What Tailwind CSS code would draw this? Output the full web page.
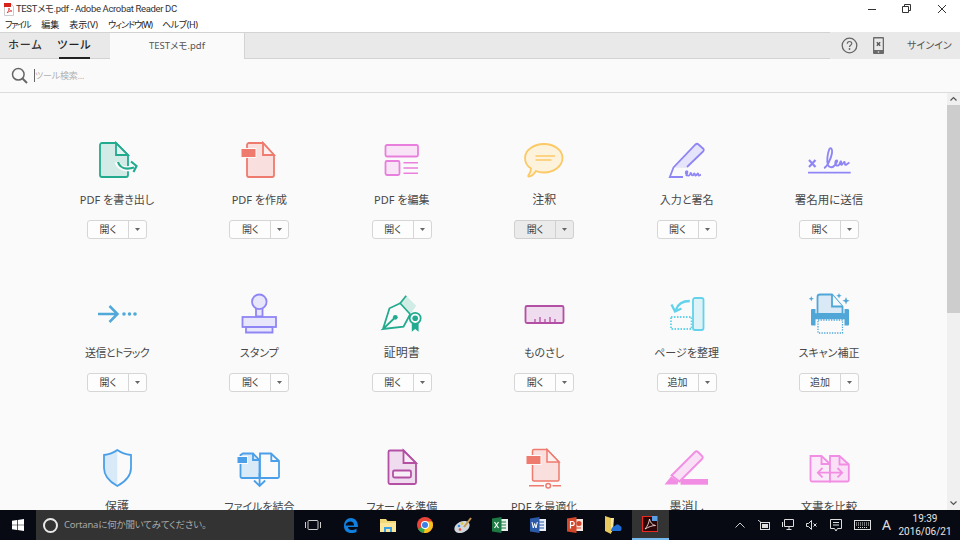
<!DOCTYPE html>
<html lang="ja">
<head>
<meta charset="utf-8">
<title>TESTメモ.pdf - Adobe Acrobat Reader DC</title>
<script src="https://cdn.jsdelivr.net/npm/@tailwindcss/browser@4"></script>
</head>
<body class="w-[960px] h-[540px] overflow-hidden flex flex-col bg-white font-['Noto_Sans','Noto_Sans_CJK_JP',sans-serif] [font-feature-settings:'palt'] text-[#444]">

<!-- title bar -->
<header class="h-[18px] flex items-center bg-white shrink-0">
  <svg class="ml-[4px] mt-[1px] w-[10px] h-[13px]" viewBox="0 0 10 13"><path d="M.5.5h6l3 3v9h-9z" fill="#fff" stroke="#ccc"/><rect x="0" y="0" width="7" height="4" fill="#d8231c"/><path d="M3 10c1-1 2-3 2-5 0 2 1 3 3 3-2 0-4 1-5 2z" fill="none" stroke="#d8231c" stroke-width=".7"/></svg>
  <span class="ml-[2px] font-['Roboto','Noto_Sans_CJK_JP',sans-serif] text-[9.500px] tracking-[-0.35px] text-[#333] whitespace-nowrap">TESTメモ.pdf - Adobe Acrobat Reader DC</span>
  <div class="ml-auto flex items-center h-full">
    <svg class="w-[10px] h-[10px] mr-[24px]" viewBox="0 0 10 10"><path d="M1 5.500h8" stroke="#333"/></svg>
    <svg class="w-[10px] h-[10px] mr-[26px]" viewBox="0 0 10 10"><path d="M1.500 2.500h6v6h-6zM3.500 2.500v-2h6v6h-2" fill="none" stroke="#333"/></svg>
    <svg class="w-[10px] h-[10px] mr-[13px]" viewBox="0 0 10 10"><path d="M1 1l8 8M9 1l-8 8" stroke="#333"/></svg>
  </div>
</header>

<!-- menu -->
<nav class="h-[14px] flex items-center gap-[10px] pl-[5px] text-[9px] text-[#222] bg-white shrink-0 whitespace-nowrap">
  <span class="tracking-[-1.5px] mr-[1px]">ファイル</span><span>編集</span><span>表示(V)</span><span class="tracking-[-1px]">ウィンドウ(W)</span><span class="tracking-[-0.4px]">ヘルプ(H)</span>
</nav>

<!-- tab bar -->
<div class="h-[27px] flex bg-[#e9e9e9] shrink-0">
  <div class="flex flex-1 border-t border-b border-[#d3d3d3]">
    <div class="w-[110px] flex text-[11px] font-medium text-[#333]">
      <span class="ml-[10px] w-[31px] h-[25px] flex items-center justify-center whitespace-nowrap tracking-[1px]">ホーム</span>
      <span class="ml-[18px] w-[31px] h-[26px] flex items-center justify-center whitespace-nowrap text-[#222] border-b-2 border-[#222] tracking-[1px]">ツール</span>
    </div>
    <div class="w-[135px] -mb-px bg-[#fafafa] border-r border-[#d3d3d3] flex items-center justify-center text-[9.500px] text-[#555]">TESTメモ.pdf</div>
  </div>
  <div class="w-[130px] flex items-center">
    <svg class="ml-[11px] w-[17px] h-[17px]" viewBox="0 0 17 17"><circle cx="8.500" cy="8.500" r="7.300" fill="none" stroke="#666" stroke-width="1.300"/><path d="M6.300 6.800c0-3 4.500-3 4.500-.2 0 1.700-2.300 1.700-2.300 3.400" fill="none" stroke="#666" stroke-width="1.200"/><circle cx="8.500" cy="12" r=".9" fill="#666"/></svg>
    <svg class="ml-[15px] w-[11px] h-[17px]" viewBox="0 0 11 17"><rect width="11" height="17" rx="1" fill="#6a6a6a"/><rect x="1.300" y="1.500" width="8.400" height="11.500" fill="#e9e9e9"/><path d="M3.800 5.300l3.400 3.400M7.200 5.300l-3.400 3.400" stroke="#555" stroke-width="1.400"/><circle cx="5.500" cy="15" r=".8" fill="#e9e9e9"/></svg>
    <span class="ml-[23px] text-[10px] text-[#555] whitespace-nowrap">サインイン</span>
  </div>
</div>

<!-- search -->
<div class="h-[34px] flex items-center bg-[#fafafa] border-b border-[#dcdcdc] shrink-0">
  <svg class="ml-[11px] w-[17px] h-[17px]" viewBox="0 0 17 17"><circle cx="7.300" cy="7.300" r="5.800" fill="none" stroke="#666" stroke-width="1.500"/><path d="M11.500 11.500l4.500 4.500" stroke="#666" stroke-width="2"/></svg>
  <span class="ml-[6px] w-px h-[13px] bg-[#666]"></span>
  <span class="text-[9px] tracking-[-0.2px] text-[#b0b0b0] whitespace-nowrap">ツール検索...</span>
</div>

<!-- main -->
<div class="flex-1 min-h-0 flex overflow-hidden bg-[#fafafa]">
  <main class="flex-1 min-w-0 overflow-hidden pl-[45.8px] pt-[47px]">
    <div class="grid grid-cols-[repeat(6,142.4px)] auto-rows-[153.3px] text-[11px] text-[#484848]">

      <!-- 1 -->
      <section class="flex flex-col items-center">
        <svg class="w-[60px] h-[44px] shrink-0" viewBox="0 0 60 44"><path d="M15 3h14l12 12v20a2 2 0 0 1-2 2H15a2 2 0 0 1-2-2V5a2 2 0 0 1 2-2z" fill="#d3ebe6" stroke="#22ab8f" stroke-width="1.800"/><path d="M29 3v12h12z" fill="#e6f4f1" stroke="#22ab8f" stroke-width="1.800"/><path d="M30 22c2 6 8 8 15 6" fill="none" stroke="#fafafa" stroke-width="5"/><path d="M31 22c2 6 8 8 16 5.500" fill="none" stroke="#22ab8f" stroke-width="2.200"/><path d="M44 21.500l5.500 4.500-3 6" fill="none" stroke="#22ab8f" stroke-width="2.200"/></svg>
        <p class="mt-[8px] h-4 leading-4 whitespace-nowrap">PDF を書き出し</p>
        <div class="mt-[12px] w-[60px] h-[19px] flex border border-[#d6d6d6] rounded-[3px] bg-white/60 text-[10px] text-[#444]"><span class="w-[41px] flex items-center justify-center border-r border-[#d6d6d6]">開く</span><span class="flex-1 flex items-center justify-center"><svg class="w-[5px] h-[3px]" viewBox="0 0 5 3"><path d="M0 0h5L2.500 3z" fill="#666"/></svg></span></div>
      </section>
      <!-- 2 -->
      <section class="flex flex-col items-center">
        <svg class="w-[60px] h-[44px] shrink-0" viewBox="0 0 60 44"><path d="M20 3h14l11 12v20a2 2 0 0 1-2 2H20a2 2 0 0 1-2-2V5a2 2 0 0 1 2-2z" fill="#f9e0de" stroke="#ef7a6e" stroke-width="1.800"/><path d="M34 3v12h11z" fill="#fcefee" stroke="#ef7a6e" stroke-width="1.800"/><rect x="12" y="8.500" width="15" height="9" fill="#ef7a6e" stroke="#fafafa"/></svg>
        <p class="mt-[8px] h-4 leading-4 whitespace-nowrap">PDF を作成</p>
        <div class="mt-[12px] w-[60px] h-[19px] flex border border-[#d6d6d6] rounded-[3px] bg-white/60 text-[10px] text-[#444]"><span class="w-[41px] flex items-center justify-center border-r border-[#d6d6d6]">開く</span><span class="flex-1 flex items-center justify-center"><svg class="w-[5px] h-[3px]" viewBox="0 0 5 3"><path d="M0 0h5L2.500 3z" fill="#666"/></svg></span></div>
      </section>
      <!-- 3 -->
      <section class="flex flex-col items-center">
        <svg class="w-[60px] h-[44px] shrink-0" viewBox="0 0 60 44"><g fill="#f8e4f6" stroke="#e97fdc" stroke-width="1.800"><rect x="13.500" y="5" width="32.500" height="11.500" rx="1.500"/><rect x="13.500" y="21" width="14" height="14" rx="1.500"/></g><path d="M31.500 22.800H46M31.500 28H46M31.500 33.300H46" stroke="#e97fdc" stroke-width="1.400"/></svg>
        <p class="mt-[8px] h-4 leading-4 whitespace-nowrap">PDF を編集</p>
        <div class="mt-[12px] w-[60px] h-[19px] flex border border-[#d6d6d6] rounded-[3px] bg-white/60 text-[10px] text-[#444]"><span class="w-[41px] flex items-center justify-center border-r border-[#d6d6d6]">開く</span><span class="flex-1 flex items-center justify-center"><svg class="w-[5px] h-[3px]" viewBox="0 0 5 3"><path d="M0 0h5L2.500 3z" fill="#666"/></svg></span></div>
      </section>
      <!-- 4 -->
      <section class="flex flex-col items-center">
        <svg class="w-[60px] h-[44px] shrink-0" viewBox="0 0 60 44"><path d="M30 4c10 0 18.500 6 18.500 14S40 32.500 30 32.500c-3 0-6-.5-8-1.500-2 3-5 5.500-7 5.500-1 0-1-1 0-2 1-1.500 2-3 2-6-4-2.500-6-6-6-10.500C11 10 20 4 30 4z" fill="#fdf3dc" stroke="#fbc965" stroke-width="1.800"/><path d="M21.500 16h19.500M21.500 20h16" stroke="#fbc965" stroke-width="1.400"/></svg>
        <p class="mt-[8px] h-4 leading-4 text-[12px] whitespace-nowrap">注釈</p>
        <div class="mt-[12px] w-[60px] h-[19px] flex border border-[#d0d0d0] rounded-[3px] bg-[#ebebeb] text-[10px] text-[#444]"><span class="w-[41px] flex items-center justify-center border-r border-[#d0d0d0]">開く</span><span class="flex-1 flex items-center justify-center"><svg class="w-[5px] h-[3px]" viewBox="0 0 5 3"><path d="M0 0h5L2.500 3z" fill="#666"/></svg></span></div>
      </section>
      <!-- 5 -->
      <section class="flex flex-col items-center">
        <svg class="w-[60px] h-[44px] shrink-0" viewBox="0 0 60 44"><path d="M16.500 27.500L40 3.500l6.500 6L29 28z" fill="#e6e4fa"/><path d="M26 37H12.800l3.700-9.500L38.500 4.500c1-1 2-1 3 0l4.500 4c1 1 1 2 0 3L30 27" fill="none" stroke="#8f86f5" stroke-width="1.800"/><path d="M29 36c2-3 2-6 0-4.500-1 2 1 5 3 4 2-1 1-3 2-2.500s0 2.500 1.500 2.500 1-2.500 2-2 0 2.500 1.500 2 1-2.500 2-2 0 2.500 1.500 2 1-1 1.500-1" fill="none" stroke="#8f86f5" stroke-width="1.700"/></svg>
        <p class="mt-[8px] h-4 leading-4 whitespace-nowrap">入力と署名</p>
        <div class="mt-[12px] w-[60px] h-[19px] flex border border-[#d6d6d6] rounded-[3px] bg-white/60 text-[10px] text-[#444]"><span class="w-[41px] flex items-center justify-center border-r border-[#d6d6d6]">開く</span><span class="flex-1 flex items-center justify-center"><svg class="w-[5px] h-[3px]" viewBox="0 0 5 3"><path d="M0 0h5L2.500 3z" fill="#666"/></svg></span></div>
      </section>
      <!-- 6 -->
      <section class="flex flex-col items-center">
        <svg class="w-[60px] h-[44px] shrink-0" viewBox="0 0 60 44"><path d="M10 20l6.500 7M16.500 20L10 27" stroke="#8f86f5" stroke-width="2.200"/><path d="M25 28c3-1 7-9 8-15 .7-4-1.500-7-3-3-1.500 4-2.500 12-1 15 1 2.500 4 3 6 1 1.500-1.500 4-5 3-5.500-1.500-.5-2.500 3-1 4.500 1.500 1.500 3.500 0 4-2 .5-2 1.200-2.500 1 0-.2 2 .5 2.500 1.500 1 1-1.500 2-3 2.200-1.500.2 2 .5 3 1.800 2 1-.7 2-1.500 3-2" fill="none" stroke="#8f86f5" stroke-width="1.900"/><path d="M9 32.700h42.700" stroke="#8f86f5" stroke-width="1.800"/></svg>
        <p class="mt-[8px] h-4 leading-4 text-[11.500px] whitespace-nowrap">署名用に送信</p>
        <div class="mt-[12px] w-[60px] h-[19px] flex border border-[#d6d6d6] rounded-[3px] bg-white/60 text-[10px] text-[#444]"><span class="w-[41px] flex items-center justify-center border-r border-[#d6d6d6]">開く</span><span class="flex-1 flex items-center justify-center"><svg class="w-[5px] h-[3px]" viewBox="0 0 5 3"><path d="M0 0h5L2.500 3z" fill="#666"/></svg></span></div>
      </section>

      <!-- 7 -->
      <section class="flex flex-col items-center">
        <svg class="w-[60px] h-[44px] shrink-0" viewBox="0 0 60 44"><path d="M11 21h19M22.500 13l8 8-8 8" fill="none" stroke="#50a9d9" stroke-width="2.500"/><circle cx="37" cy="21" r="1.800" fill="#50a9d9"/><circle cx="42.500" cy="21" r="1.800" fill="#50a9d9"/><circle cx="48" cy="21" r="1.800" fill="#50a9d9"/></svg>
        <p class="mt-[8px] h-4 leading-4 tracking-[-0.6px] whitespace-nowrap">送信とトラック</p>
        <div class="mt-[12px] w-[60px] h-[19px] flex border border-[#d6d6d6] rounded-[3px] bg-white/60 text-[10px] text-[#444]"><span class="w-[41px] flex items-center justify-center border-r border-[#d6d6d6]">開く</span><span class="flex-1 flex items-center justify-center"><svg class="w-[5px] h-[3px]" viewBox="0 0 5 3"><path d="M0 0h5L2.500 3z" fill="#666"/></svg></span></div>
      </section>
      <!-- 8 -->
      <section class="flex flex-col items-center">
        <svg class="w-[60px] h-[44px] shrink-0" viewBox="0 0 60 44"><g fill="#e8e6fb" stroke="#8f86f5" stroke-width="1.800"><path d="M27 15v8.500h6.500V15"/><circle cx="30.300" cy="8.800" r="7.300"/><rect x="13.500" y="24" width="33.500" height="10"/><path d="M17 34h26.500v5.500H17z"/></g></svg>
        <p class="mt-[8px] h-4 leading-4 whitespace-nowrap">スタンプ</p>
        <div class="mt-[12px] w-[60px] h-[19px] flex border border-[#d6d6d6] rounded-[3px] bg-white/60 text-[10px] text-[#444]"><span class="w-[41px] flex items-center justify-center border-r border-[#d6d6d6]">開く</span><span class="flex-1 flex items-center justify-center"><svg class="w-[5px] h-[3px]" viewBox="0 0 5 3"><path d="M0 0h5L2.500 3z" fill="#666"/></svg></span></div>
      </section>
      <!-- 9 -->
      <section class="flex flex-col items-center">
        <svg class="w-[60px] h-[44px] shrink-0" viewBox="0 0 60 44"><path d="M28.200 10.300l6-7.600 10 10-6 8.600z" fill="#d0ece5"/><path d="M34.200 2.700l-6 7.600 10 11" fill="none" stroke="#22ab8f" stroke-width="1.700"/><path d="M11 36l6.500-20.700 10.700-5M38.200 21.300L31.500 33.700 11 36l11-10.500" fill="none" stroke="#22ab8f" stroke-width="1.800"/><circle cx="23.300" cy="24.300" r="2.400" fill="#22ab8f"/><circle cx="43.200" cy="25.300" r="5.500" fill="#fafafa" stroke="#22ab8f" stroke-width="1.700"/><circle cx="43.200" cy="25.300" r="2.800" fill="#22ab8f"/><path d="M39.800 30v8.700l3.400-2.700 3.400 2.700V30" fill="#22ab8f"/></svg>
        <p class="mt-[8px] h-4 leading-4 text-[12px] whitespace-nowrap">証明書</p>
        <div class="mt-[12px] w-[60px] h-[19px] flex border border-[#d6d6d6] rounded-[3px] bg-white/60 text-[10px] text-[#444]"><span class="w-[41px] flex items-center justify-center border-r border-[#d6d6d6]">開く</span><span class="flex-1 flex items-center justify-center"><svg class="w-[5px] h-[3px]" viewBox="0 0 5 3"><path d="M0 0h5L2.500 3z" fill="#666"/></svg></span></div>
      </section>
      <!-- 10 -->
      <section class="flex flex-col items-center">
        <svg class="w-[60px] h-[44px] shrink-0" viewBox="0 0 60 44"><rect x="11.500" y="13" width="38" height="17" rx="1.500" fill="#efdcee" stroke="#b350a3" stroke-width="1.800"/><path d="M21 30v-4M26 30v-6M31 30v-4M36 30v-6M41 30v-4" stroke="#b350a3" stroke-width="1.300"/></svg>
        <p class="mt-[8px] h-4 leading-4 whitespace-nowrap">ものさし</p>
        <div class="mt-[12px] w-[60px] h-[19px] flex border border-[#d6d6d6] rounded-[3px] bg-white/60 text-[10px] text-[#444]"><span class="w-[41px] flex items-center justify-center border-r border-[#d6d6d6]">開く</span><span class="flex-1 flex items-center justify-center"><svg class="w-[5px] h-[3px]" viewBox="0 0 5 3"><path d="M0 0h5L2.500 3z" fill="#666"/></svg></span></div>
      </section>
      <!-- 11 -->
      <section class="flex flex-col items-center">
        <svg class="w-[60px] h-[44px] shrink-0" viewBox="0 0 60 44"><rect x="36" y="5" width="10.500" height="32" rx="2" fill="#def3f8" stroke="#63d2eb" stroke-width="1.800"/><rect x="14" y="24" width="20.500" height="12" fill="none" stroke="#63d2eb" stroke-width="1.800" stroke-dasharray="1.500 1.500"/><path d="M32.800 8c-7 0-12 3-14 9" fill="none" stroke="#63d2eb" stroke-width="2.300"/><path d="M14.500 11.500l3.500 7 6.500-3" fill="none" stroke="#63d2eb" stroke-width="2.300"/></svg>
        <p class="mt-[8px] h-4 leading-4 whitespace-nowrap">ページを整理</p>
        <div class="mt-[12px] w-[60px] h-[19px] flex border border-[#d6d6d6] rounded-[3px] bg-white/60 text-[10px] text-[#444]"><span class="w-[41px] flex items-center justify-center border-r border-[#d6d6d6]">追加</span><span class="flex-1 flex items-center justify-center"><svg class="w-[5px] h-[3px]" viewBox="0 0 5 3"><path d="M0 0h5L2.500 3z" fill="#666"/></svg></span></div>
      </section>
      <!-- 12 -->
      <section class="flex flex-col items-center">
        <svg class="w-[60px] h-[44px] shrink-0" viewBox="0 0 60 44"><path d="M21 1.500h12l10.500 12V21h-25V4a2.500 2.500 0 0 1 2.500-2.500z" fill="#d9e9f5" stroke="#4fa6d7" stroke-width="1.800"/><path d="M33 1.500V13.500h10.500" fill="#f5f9fc" stroke="#4fa6d7" stroke-width="1.800"/><path d="M12 17a1 1 0 0 1 1-1h3.500v4.300h29V16H49a1 1 0 0 1 1 1v14.500a1 1 0 0 1-1 1h-3.500v-6.200h-29v6.200H13a1 1 0 0 1-1-1z" fill="#4fa6d7"/><rect x="19" y="27" width="24.500" height="13" fill="none" stroke="#4fa6d7" stroke-width="1.300" stroke-dasharray="1.300 1.300"/><path d="M12.300 3l.7 2 2 .7-2 .7-.7 2-.7-2-2-.7 2-.7zM40 0l.8 2 2 .8-2 .8-.8 2-.8-2-2-.8 2-.8zM47 4l1 2.700 2.700 1-2.700 1-1 2.700-1-2.700-2.700-1 2.700-1z" fill="#4fa6d7"/></svg>
        <p class="mt-[8px] h-4 leading-4 whitespace-nowrap">スキャン補正</p>
        <div class="mt-[12px] w-[60px] h-[19px] flex border border-[#d6d6d6] rounded-[3px] bg-white/60 text-[10px] text-[#444]"><span class="w-[41px] flex items-center justify-center border-r border-[#d6d6d6]">追加</span><span class="flex-1 flex items-center justify-center"><svg class="w-[5px] h-[3px]" viewBox="0 0 5 3"><path d="M0 0h5L2.500 3z" fill="#666"/></svg></span></div>
      </section>

      <!-- 13 -->
      <section class="flex flex-col items-center">
        <svg class="w-[60px] h-[44px] shrink-0" viewBox="0 0 60 44"><path d="M30.300 3C26 6 21 7.500 17 8v13c0 8 6 14 13.300 18z" fill="#d8e9f8"/><path d="M30.300 3c4.300 3 9.300 4.500 13.700 5v13c0 8-6.400 14-13.700 18C23 35 17 29 17 21V8c4-.5 9-2 13.300-5z" fill="none" stroke="#4a9fe8" stroke-width="1.800"/></svg>
        <p class="mt-[8px] h-4 leading-4 text-[12px] whitespace-nowrap">保護</p>
      </section>
      <!-- 14 -->
      <section class="flex flex-col items-center">
        <svg class="w-[60px] h-[44px] shrink-0" viewBox="0 0 60 44"><path d="M14 6.500h10l6.500 6.500v18H13a1.500 1.500 0 0 1-1.500-1.500V8z" fill="#d8e9f8" stroke="#4a9fe8" stroke-width="1.800"/><path d="M31 6.500h11l8 7.500v15.500a1.500 1.500 0 0 1-1.500 1.500H31z" fill="#fafafa" stroke="#4a9fe8" stroke-width="1.800"/><path d="M24 6.500V13h6.500M42.300 6.500V14H50" fill="none" stroke="#4a9fe8" stroke-width="1.800"/><rect x="8" y="9.500" width="10.500" height="7" fill="#4a9fe8" stroke="#fafafa"/><path d="M30.600 26v12.500M25 33.500l5.600 5.500 5.600-5.500" fill="none" stroke="#4a9fe8" stroke-width="1.800"/></svg>
        <p class="mt-[8px] h-4 leading-4 whitespace-nowrap">ファイルを結合</p>
      </section>
      <!-- 15 -->
      <section class="flex flex-col items-center">
        <svg class="w-[60px] h-[44px] shrink-0" viewBox="0 0 60 44"><path d="M18 3.500h13.500L44 16v19.500a1.500 1.500 0 0 1-1.500 1.500H18a1.500 1.500 0 0 1-1.500-1.500V5A1.500 1.500 0 0 1 18 3.500z" fill="#efdcee" stroke="#b350a3" stroke-width="1.800"/><path d="M31.500 3.500V16H44z" fill="#f8eef7" stroke="#b350a3" stroke-width="1.800"/><rect x="21" y="23.500" width="18" height="7" rx="1.500" fill="#f8eef7" stroke="#b350a3" stroke-width="1.800"/></svg>
        <p class="mt-[8px] h-4 leading-4 whitespace-nowrap">フォームを準備</p>
      </section>
      <!-- 16 -->
      <section class="flex flex-col items-center">
        <svg class="w-[60px] h-[44px] shrink-0" viewBox="0 0 60 44"><path d="M20 2.500h13L45 15v17.500a1.500 1.500 0 0 1-1.500 1.500H20a1.500 1.500 0 0 1-1.500-1.500V4A1.500 1.500 0 0 1 20 2.500z" fill="#f9e0de" stroke="#ef7a6e" stroke-width="1.500"/><path d="M33 2.500V15h12z" fill="#fcefee" stroke="#ef7a6e" stroke-width="1.500"/><rect x="12" y="8.500" width="15" height="9" fill="#ef7a6e" stroke="#fafafa"/><path d="M15 38.700h15M38.500 38.700h8.500" stroke="#ef7a6e" stroke-width="1.500"/><circle cx="34.200" cy="38.700" r="2.300" fill="#fafafa" stroke="#ef7a6e" stroke-width="1.500"/></svg>
        <p class="mt-[8px] h-4 leading-4 whitespace-nowrap">PDF を最適化</p>
      </section>
      <!-- 17 -->
      <section class="flex flex-col items-center">
        <svg class="w-[60px] h-[44px] shrink-0" viewBox="0 0 60 44"><path d="M14.500 28.500L38 5c1-1 2-1 3 0l4 4c1 1 1 2 0 3L22.500 34.500z" fill="#f9e0f6" stroke="#f28de4" stroke-width="1.800"/><path d="M14 29.500L7.500 37.500H20.500l1-3z" fill="#f28de4"/><rect x="23.500" y="32" width="27.500" height="5.700" fill="#f28de4"/></svg>
        <p class="mt-[8px] h-4 leading-4 text-[12px] whitespace-nowrap">墨消し</p>
      </section>
      <!-- 18 -->
      <section class="flex flex-col items-center">
        <svg class="w-[60px] h-[44px] shrink-0" viewBox="0 0 60 44"><path d="M11.500 9h11L31 17v17.500H13a1.500 1.500 0 0 1-1.500-1.500z" fill="#fbeaf9" stroke="#f28de4" stroke-width="1.800"/><path d="M31 9h9.500l9.300 8.500V33a1.500 1.500 0 0 1-1.500 1.500H31z" fill="#f9e0f6" stroke="#f28de4" stroke-width="1.800"/><path d="M22.500 9v8H31M40.500 9v8.500h9.300" fill="none" stroke="#f28de4" stroke-width="1.800"/><path d="M19 25.700h24M23.500 21l-4.700 4.700 4.700 4.700M38.500 21l4.700 4.700-4.700 4.700" fill="none" stroke="#f28de4" stroke-width="1.800"/></svg>
        <p class="mt-[8px] h-4 leading-4 text-[11.500px] whitespace-nowrap">文書を比較</p>
      </section>
    </div>
  </main>

  <!-- scrollbar -->
  <aside class="w-[13px] shrink-0 bg-[#f0f0f0] flex flex-col items-center">
    <svg class="mt-[3px] w-[7px] h-[5px] shrink-0" viewBox="0 0 7 5"><path d="M.5 4.500l3-3 3 3" fill="none" stroke="#555" stroke-width="1.200"/></svg>
    <div class="mt-[4px] w-full h-[208px] bg-[#cdcdcd] shrink-0"></div>
    <svg class="mt-auto mb-[4px] w-[7px] h-[5px] shrink-0" viewBox="0 0 7 5"><path d="M.5.5l3 3 3-3" fill="none" stroke="#555" stroke-width="1.200"/></svg>
  </aside>
</div>

<!-- taskbar -->
<footer class="h-[30px] shrink-0 flex items-stretch bg-[#070a12] text-white">
  <div class="w-[36px] flex items-center justify-center"><svg class="w-[12px] h-[12px]" viewBox="0 0 12 12"><path d="M0 1.700L5 1v4.700H0zM5.700.9L12 0v5.700H5.700zM0 6.300h5V11l-5-.7zM5.700 6.300H12V12l-6.300-.9z" fill="#fff"/></svg></div>
  <div class="w-[258px] bg-[#333] flex items-center">
    <span class="ml-[7px] w-[15px] h-[15px] rounded-full border-2 border-[#e8e8e8] shrink-0"></span>
    <span class="ml-[6px] text-[9.500px] tracking-[-0.2px] text-[#a8a8a8] whitespace-nowrap">Cortanaに何か聞いてみてください。</span>
  </div>
  <div class="w-[37.5px] flex items-center justify-center"><svg class="w-[16px] h-[10px]" viewBox="0 0 16 10"><rect x="3" y=".5" width="10" height="9" rx="1" fill="none" stroke="#ccc"/><path d="M.5 2v6M15.500 2v6" stroke="#ccc"/></svg></div>
  <div class="w-[37.5px] flex items-center justify-center"><svg class="w-[15px] h-[15px]" viewBox="0 0 15 15"><path d="M2.500 7.500h8.500C11 5 9.500 3.500 7.500 3.500 5 3.500 3 5 2.500 7.500zM1 8C1 3 4 0 8 0c4.500 0 7 3.500 7 9H5c0 2 1.500 3 3.500 3 2 0 3.500-.5 5-1.500V14c-1.500.7-3 1-5 1C4 15 1 12.500 1 8z" fill="#0f7fe0" fill-rule="evenodd"/></svg></div>
  <div class="w-[37.5px] flex items-center justify-center"><svg class="w-[16px] h-[15px]" viewBox="0 0 16 15"><path d="M0 1h6l1.500 2H16v11H0z" fill="#f3d878"/><rect y="5" width="16" height="9" fill="#fbe69a"/><rect x="4" y="9" width="8" height="5" fill="#3aa0e8"/><rect x="6" y="11" width="4" height="3" fill="#fbe69a"/></svg></div>
  <div class="w-[37.5px] flex items-center justify-center"><svg class="w-[16px] h-[16px]" viewBox="0 0 16 16"><circle cx="8" cy="8" r="8" fill="#e8453a"/><path d="M8 8L1 12A8 8 0 0 0 8 16z" fill="#30a753"/><path d="M8 8l-1 8A8 8 0 0 0 16 8z" fill="#f9c11c"/><path d="M8 4.500H15.200A8 8 0 0 1 16 8L8 8z" fill="#f9c11c"/><circle cx="8" cy="8" r="4" fill="#fff"/><circle cx="8" cy="8" r="3" fill="#3b7fe8"/></svg></div>
  <div class="w-[37.5px] flex items-center justify-center"><svg class="w-[18px] h-[16px]" viewBox="0 0 18 16"><ellipse cx="8" cy="10" rx="8" ry="5.500" fill="#cfd6dc" transform="rotate(-25 8 10)"/><circle cx="5" cy="9" r="1.300" fill="#3c8de0"/><circle cx="8" cy="6.500" r="1.300" fill="#e0c23c"/><circle cx="6" cy="12.500" r="1.300" fill="#d9523c"/><path d="M10 10L17 1" stroke="#c89a4a" stroke-width="2"/></svg></div>
  <div class="w-[37.5px] flex items-center justify-center"><svg class="w-[16px] h-[16px]" viewBox="0 0 16 16"><rect x="5" y="2" width="11" height="12" fill="#e8f2ec"/><path d="M9 5h5M9 8h5M9 11h5" stroke="#1f7a45"/><path d="M0 1.500L9.500 0v16L0 14.500z" fill="#1d7a44"/><path d="M2.500 5l4 6M6.500 5l-4 6" stroke="#fff" stroke-width="1.200"/></svg></div>
  <div class="w-[37.5px] flex items-center justify-center"><svg class="w-[16px] h-[16px]" viewBox="0 0 16 16"><rect x="5" y="2" width="11" height="12" fill="#e8eef8"/><path d="M9 5h5M9 8h5M9 11h5" stroke="#2b5aa8"/><path d="M0 1.500L9.500 0v16L0 14.500z" fill="#2b5aa8"/><path d="M2 5l1.300 6L4.700 6.500 6 11l1.300-6" fill="none" stroke="#fff"/></svg></div>
  <div class="w-[37.5px] flex items-center justify-center"><svg class="w-[16px] h-[16px]" viewBox="0 0 16 16"><rect x="5" y="2" width="11" height="12" fill="#f6e6e0"/><circle cx="12" cy="6.500" r="2.500" fill="#d2472a"/><path d="M9 11h5" stroke="#d2472a"/><path d="M0 1.500L9.500 0v16L0 14.500z" fill="#d2472a"/><path d="M3.500 11.500v-7h1.700a1.800 1.800 0 0 1 0 4H3.500" fill="none" stroke="#fff" stroke-width="1.200"/></svg></div>
  <div class="w-[37.5px] flex items-center justify-center"><svg class="w-[18px] h-[18px]" viewBox="0 0 18 18"><path d="M1 0l6 2v16l-6-3z" fill="#e8c95e"/><path d="M7 2h3l-1 12-2 3z" fill="#f4e7a6"/><path d="M7 15c0-3 2-5 4-5 1-2 4-2 5 0 2 0 2 5 0 5z" fill="#1f6fd6"/></svg></div>
  <div class="w-[37.5px] bg-[#333] border-b-2 border-[#76b9ed] flex items-center justify-center"><svg class="w-[16px] h-[16px]" viewBox="0 0 16 16"><rect x=".5" y=".5" width="15" height="15" fill="#2a0608" stroke="#ea2a20"/><path d="M3 13c2-2 4-6 4.500-10 .5 3 2.500 6 6 6.500-3.500 0-7 1.500-10.500 3.500z" fill="none" stroke="#f5d8d6" stroke-width=".9"/><rect x="10" y="0" width="5" height="5" fill="#5aa0e8"/></svg></div>

  <div class="ml-auto flex items-center">
    <svg class="w-[10px] h-[6px]" viewBox="0 0 10 6"><path d="M.5 5.500L5 1l4.500 4.500" fill="none" stroke="#ccc"/></svg>
    <svg class="ml-[13px] w-[12px] h-[10px]" viewBox="0 0 12 10"><rect x="2.500" y="2.500" width="9" height="7" fill="none" stroke="#ddd"/><rect x="4" y="4" width="6" height="4" fill="#ddd"/><path d="M0 0l3 2.500" stroke="#ddd"/></svg>
    <svg class="ml-[12px] w-[12px] h-[12px]" viewBox="0 0 12 12"><path d="M2.500 .5h9v7h-9zM7 7.500v3M4.500 10.500h5" fill="none" stroke="#ddd"/><path d="M.5 3v5" stroke="#ddd"/></svg>
    <svg class="ml-[12px] w-[11px] h-[10px]" viewBox="0 0 11 10"><path d="M.5 3.500h2L5.500.5v9l-3-3h-2z" fill="none" stroke="#ddd"/><path d="M7.500 3.500l3 3M10.500 3.500l-3 3" stroke="#ddd"/></svg>
    <svg class="ml-[13px] w-[12px] h-[13px]" viewBox="0 0 12 13"><path d="M.5.500h11v9H7.500L6 12 4.500 9.500h-4z" fill="none" stroke="#ddd"/><path d="M3 3.500h6M3 6h6" stroke="#ddd"/></svg>
    <svg class="ml-[12px] w-[17px] h-[10px]" viewBox="0 0 17 10"><rect x=".5" y=".5" width="16" height="9" fill="none" stroke="#ddd"/><path d="M2 3h13M2 5h13M4 7.500h9" stroke="#ddd" stroke-dasharray="1 1"/></svg>
    <span class="ml-[11px] w-[8px] text-[14px] text-[#ddd] leading-none">A</span>
    <div class="ml-[12px] mr-[12px] w-[46px] flex flex-col items-center font-['Roboto',sans-serif] text-[10px] leading-[13px] text-[#e4e4e4]"><span>19:39</span><span class="whitespace-nowrap">2016/06/21</span></div>
  </div>
</footer>
</body>
</html>
